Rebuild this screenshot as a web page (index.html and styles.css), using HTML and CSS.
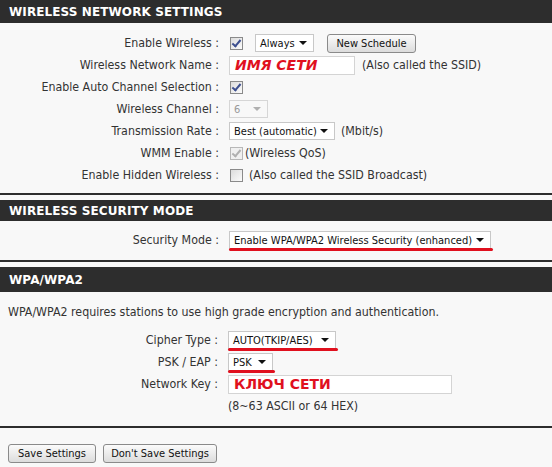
FILE: index.html
```html
<!DOCTYPE html>
<html>
<head>
<meta charset="utf-8">
<link rel="stylesheet" href="styles.css">
</head>
<body>
<div class="page">
  <h2 class="bar bar-first">WIRELESS NETWORK SETTINGS</h2>
  <div class="form form-wireless">
    <div class="row">
      <span class="lbl">Enable Wireless :</span>
      <div class="val">
        <span class="chk on"></span>
        <span class="sel sel-always">Always<i class="arr"></i></span>
        <span class="btn btn-sched">New Schedule</span>
      </div>
    </div>
    <div class="row">
      <span class="lbl">Wireless Network Name :</span>
      <div class="val">
        <span class="inp inp-name">ИМЯ СЕТИ</span>
        <span class="note note-ssid">(Also called the SSID)</span>
      </div>
    </div>
    <div class="row">
      <span class="lbl">Enable Auto Channel Selection :</span>
      <div class="val"><span class="chk on"></span></div>
    </div>
    <div class="row">
      <span class="lbl">Wireless Channel :</span>
      <div class="val"><span class="sel sel-chan disabled">6<i class="arr"></i></span></div>
    </div>
    <div class="row">
      <span class="lbl">Transmission Rate :</span>
      <div class="val">
        <span class="sel sel-rate">Best (automatic)<i class="arr"></i></span>
        <span class="note note-mbit">(Mbit/s)</span>
      </div>
    </div>
    <div class="row">
      <span class="lbl">WMM Enable :</span>
      <div class="val">
        <span class="chk on disabled"></span>
        <span class="note note-qos">(Wireless QoS)</span>
      </div>
    </div>
    <div class="row">
      <span class="lbl">Enable Hidden Wireless :</span>
      <div class="val">
        <span class="chk"></span>
        <span class="note note-hidden">(Also called the SSID Broadcast)</span>
      </div>
    </div>
  </div>
  <div class="sep sep-1"></div>

  <h2 class="bar bar-second">WIRELESS SECURITY MODE</h2>
  <div class="form form-mode">
    <div class="row">
      <span class="lbl">Security Mode :</span>
      <div class="val">
        <span class="sel sel-mode mark">Enable WPA/WPA2 Wireless Security (enhanced)<i class="arr"></i></span>
      </div>
    </div>
  </div>
  <div class="sep sep-2"></div>

  <h2 class="bar bar-third">WPA/WPA2</h2>
  <p class="intro">WPA/WPA2 requires stations to use high grade encryption and authentication.</p>
  <div class="form form-wpa">
    <div class="row">
      <span class="lbl">Cipher Type :</span>
      <div class="val"><span class="sel sel-cipher mark">AUTO(TKIP/AES)<i class="arr"></i></span></div>
    </div>
    <div class="row">
      <span class="lbl">PSK / EAP :</span>
      <div class="val"><span class="sel sel-psk mark">PSK<i class="arr"></i></span></div>
    </div>
    <div class="row">
      <span class="lbl">Network Key :</span>
      <div class="val"><span class="inp inp-key">КЛЮЧ СЕТИ</span></div>
    </div>
    <div class="row row-hint">
      <span class="lbl"></span>
      <div class="val"><span class="note">(8~63 ASCII or 64 HEX)</span></div>
    </div>
  </div>
  <div class="sep sep-3"></div>

  <div class="actions">
    <span class="btn btn-save">Save Settings</span>
    <span class="btn btn-nosave">Don't Save Settings</span>
  </div>
</div>
</body>
</html>
```

FILE: styles.css
```css
html, body {
  margin: 0;
  padding: 0;
  background: #f8f8f8;
}
body {
  width: 552px;
  height: 467px;
  overflow: hidden;
  font-family: "DejaVu Sans Condensed", "DejaVu Sans", sans-serif;
  font-size: 12.3px;
  color: #333;
}
.page {
  display: flex;
  flex-direction: column;
}
.bar {
  margin: 0;
  background: #2d2d2d;
  color: #fff;
  font-family: "DejaVu Sans", sans-serif;
  font-weight: bold;
  font-size: 12px;
  letter-spacing: 0.1px;
  padding-left: 9px;
  display: flex;
  align-items: center;
}
.bar-first { height: 23px; }
.bar-second { height: 21px; margin-top: 5px; }
.bar-third { height: 25px; margin-top: 5px; }

.form {
  display: flex;
  flex-direction: column;
}
.form-wireless { padding: 9px 0 7px; }
.form-mode { padding: 8px 0 9px; }
.form-wpa { padding: 10px 0 9px; }

.row {
  display: grid;
  grid-template-columns: 219px 1fr;
  column-gap: 10px;
  height: 22px;
  align-items: center;
}
.form-wpa .row { grid-template-columns: 218px 1fr; column-gap: 10px; }
.lbl {
  text-align: right;
  white-space: nowrap;
}
.val {
  display: flex;
  align-items: center;
  white-space: nowrap;
}

.sep {
  height: 2px;
  background: #2d2d2d;
}

.intro {
  margin: 13px 0 0 8px;
  line-height: 14px;
  white-space: nowrap;
}

/* checkbox */
.chk {
  width: 11px;
  height: 11px;
  border: 1px solid #8a8a8a;
  background: linear-gradient(135deg, #dcdcdc, #fbfbfb);
  margin-left: 1px;
  position: relative;
  flex: none;
}
.chk.on::after {
  content: "";
  position: absolute;
  left: 3px;
  top: 0px;
  width: 3px;
  height: 7px;
  border: solid #3d4f8f;
  border-width: 0 2px 2px 0;
  transform: rotate(40deg);
}
.chk.disabled { border-color: #b8b8b8; background: #f0f0f0; }
.chk.disabled::after { border-color: #b0b0b0; }

/* select */
.sel {
  box-sizing: border-box;
  height: 18px;
  border: 1px solid #c8c8c8;
  background: #fff;
  display: inline-flex;
  align-items: center;
  padding-left: 4px;
  position: relative;
  color: #111;
  font-size: 11px;
  flex: none;
}
.sel .arr {
  flex: none;
  width: 0;
  height: 0;
  border-left: 4px solid transparent;
  border-right: 4px solid transparent;
  border-top: 4px solid #111;
  margin-left: auto;
  margin-right: 6px;
}
.sel.disabled { color: #999; border-color: #d6d6d6; background: #f8f8f8; }
.sel.disabled .arr { border-top-color: #b0b0b0; }
.sel-always { width: 59px; margin-left: 12px; }
.sel-chan { width: 39px; }
.sel-rate { width: 106px; }
.sel-mode { width: 262px; }
.sel-cipher { width: 108px; }
.sel-psk { width: 45px; }

.mark::after {
  content: "";
  position: absolute;
  left: -1px;
  right: -3px;
  bottom: -3px;
  height: 3px;
  border-radius: 2px;
  background: #e0101e;
}

/* text inputs */
.inp {
  box-sizing: border-box;
  height: 19px;
  border: 1px solid #d4d4d4;
  background: #fff;
  color: #e0101e;
  font-family: "DejaVu Sans", sans-serif;
  font-weight: bold;
  font-style: italic;
  font-size: 14px;
  display: inline-flex;
  align-items: center;
  padding-left: 5px;
  flex: none;
}
.inp-name { width: 126px; }
.inp-key { width: 224px; font-style: normal; font-size: 14px; }

.note-ssid { margin-left: 7px; }
.note-mbit { margin-left: 6px; }
.note-qos { margin-left: 2px; }
.note-hidden { margin-left: 6px; }

/* buttons */
.btn {
  box-sizing: border-box;
  display: inline-flex;
  align-items: center;
  justify-content: center;
  height: 19px;
  border: 1px solid #8a8a8a;
  border-radius: 3px;
  background: linear-gradient(#fbfbfb, #dcdcdc);
  color: #111;
  font-size: 11px;
  white-space: nowrap;
  flex: none;
}
.btn-sched { margin-left: 13px; width: 89px; }
.actions {
  display: flex;
  gap: 7px;
  padding: 16px 0 0 8px;
}
.btn-save { width: 88px; }
.btn-nosave { width: 114px; }
```
